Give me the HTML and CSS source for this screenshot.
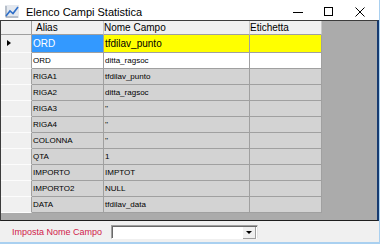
FILE: index.html
```html
<!DOCTYPE html>
<html lang="it">
<head>
    <meta charset="UTF-8">
    <meta name="viewport" content="width=device-width, initial-scale=1.0">
    <title>Elenco Campi Statistica</title>
    <link rel="stylesheet" href="styles.css">
</head>
<body>
    <div class="window">
        <div class="titlebar">
            <svg class="app-icon" width="16" height="16" viewBox="0 0 16 16">
                <rect x="1" y="2" width="14" height="13" fill="#e4e8ee"/>
                <path d="M2 3v11h12" fill="none" stroke="#8a96a6" stroke-width="1"/>
                <polyline points="2,13 6,8 9,10.5 14,4" fill="none" stroke="#2f6fc8" stroke-width="1.6"/>
            </svg>
            <span class="title">Elenco Campi Statistica</span>
            <div class="controls">
                <svg width="10" height="10" viewBox="0 0 10 10"><path d="M0 5.5h10" stroke="#000" stroke-width="1"/></svg>
                <svg width="10" height="10" viewBox="0 0 10 10"><rect x="0.5" y="0.5" width="8" height="8" fill="none" stroke="#000"/></svg>
                <svg width="10" height="10" viewBox="0 0 10 10"><path d="M0.5 0.5l9 9M9.5 0.5l-9 9" stroke="#000" stroke-width="1"/></svg>
            </div>
        </div>

        <div class="grid-area">
            <div class="grid">
                <div class="hdr corner"></div>
                <div class="hdr alias">Alias</div>
                <div class="hdr">Nome Campo</div>
                <div class="hdr">Etichetta</div>

                <div class="rh current"><span class="arrow"></span></div>
                <div class="cell sel-blue big">ORD</div>
                <div class="cell sel-yellow big">tfdilav_punto</div>
                <div class="cell sel-yellow big"></div>

                <div class="rh"></div>
                <div class="cell white">ORD</div>
                <div class="cell white">ditta_ragsoc</div>
                <div class="cell white"></div>

                <div class="rh"></div>
                <div class="cell">RIGA1</div>
                <div class="cell">tfdilav_punto</div>
                <div class="cell"></div>

                <div class="rh"></div>
                <div class="cell">RIGA2</div>
                <div class="cell">ditta_ragsoc</div>
                <div class="cell"></div>

                <div class="rh"></div>
                <div class="cell">RIGA3</div>
                <div class="cell">''</div>
                <div class="cell"></div>

                <div class="rh"></div>
                <div class="cell">RIGA4</div>
                <div class="cell">''</div>
                <div class="cell"></div>

                <div class="rh"></div>
                <div class="cell">COLONNA</div>
                <div class="cell">''</div>
                <div class="cell"></div>

                <div class="rh"></div>
                <div class="cell">QTA</div>
                <div class="cell">1</div>
                <div class="cell"></div>

                <div class="rh"></div>
                <div class="cell">IMPORTO</div>
                <div class="cell">IMPTOT</div>
                <div class="cell"></div>

                <div class="rh"></div>
                <div class="cell">IMPORTO2</div>
                <div class="cell">NULL</div>
                <div class="cell"></div>

                <div class="rh"></div>
                <div class="cell">DATA</div>
                <div class="cell">tfdilav_data</div>
                <div class="cell"></div>
            </div>
        </div>

        <div class="panel">
            <span class="label">Imposta Nome Campo</span>
            <div class="combo">
                <span class="combo-btn"></span>
            </div>
        </div>
    </div>
</body>
</html>
```

FILE: styles.css
```css
body {
    margin: 0;
    font-family: 'Liberation Sans', Arial, sans-serif;
    background-color: #f0f0f0;
}

.window {
    width: 380px;
    height: 244px;
    display: flex;
    flex-direction: column;
    box-sizing: border-box;
    border-bottom: 2px solid #a9d0f0;
    border-right: 1px solid #a9d0f0;
    overflow: hidden;
}

.titlebar {
    height: 20px;
    background-color: #fff;
    display: flex;
    align-items: center;
    flex-shrink: 0;
}

.app-icon {
    margin-left: 4px;
    margin-top: 2px;
}

.title {
    margin-left: 6px;
    font-size: 11px;
    color: #000;
    margin-top: 3px;
}

.controls {
    margin-left: auto;
    display: flex;
    align-items: center;
    gap: 21px;
    margin-right: 14px;
    margin-top: 3px;
}

.grid-area {
    height: 201px;
    box-sizing: border-box;
    background-color: #ababab;
    border-top: 1px solid #3c3c3c;
    border-left: 1px solid #3c3c3c;
    border-bottom: 1px solid #1e1e1e;
    border-right: 2px solid #163a70;
    flex-shrink: 0;
}

.grid {
    display: grid;
    grid-template-columns: 31px 72px 146px 72px;
    grid-template-rows: 14px 18px repeat(10, 16px);
}

.hdr {
    background-color: #f0f0f0;
    border-right: 1px solid #c8c8c8;
    border-bottom: 1px solid #a0a0a0;
    font-size: 10px;
    line-height: 13px;
    padding-left: 0;
    color: #000;
    white-space: nowrap;
    overflow: hidden;
}

.hdr.alias {
    padding-left: 4px;
}

.hdr.corner {
    border-right: 1px solid #a0a0a0;
}

.rh {
    background-color: #f0f0f0;
    border-right: 1px solid #a0a0a0;
    border-bottom: 1px solid #fcfcfc;
    position: relative;
}

.arrow {
    position: absolute;
    left: 6px;
    top: 5px;
    width: 0;
    height: 0;
    border-top: 3px solid transparent;
    border-bottom: 3px solid transparent;
    border-left: 4px solid #000;
}

.cell {
    background-color: #d3d3d3;
    border-right: 1px solid #a0a0a0;
    border-bottom: 1px solid #a0a0a0;
    font-size: 8px;
    line-height: 15px;
    padding-left: 1px;
    color: #000;
    white-space: nowrap;
    overflow: hidden;
}

.cell.white {
    background-color: #fff;
}

.cell.big {
    font-size: 10px;
    line-height: 17px;
}

.cell.sel-blue {
    background-color: #3399ff;
    color: #fff;
}

.cell.sel-yellow {
    background-color: #ffff00;
}

.panel {
    flex: 1;
    display: flex;
    align-items: center;
    background-color: #f0f0f0;
}

.label {
    margin-left: 12px;
    font-size: 9px;
    color: #d0194a;
    width: 99px;
}

.combo {
    width: 147px;
    height: 14px;
    box-sizing: border-box;
    background-color: #fff;
    border-top: 1px solid #a0a0a0;
    border-left: 1px solid #a0a0a0;
    border-right: 1px solid #e3e3e3;
    border-bottom: 1px solid #fff;
    box-shadow: inset 1px 1px 0 #696969;
    display: flex;
    justify-content: flex-end;
    margin-top: 1px;
}

.combo-btn {
    width: 12px;
    height: 11px;
    margin: 1px 1px 0 0;
    background-color: #f0f0f0;
    border-right: 1px solid #a0a0a0;
    border-bottom: 1px solid #a0a0a0;
    display: flex;
    align-items: center;
    justify-content: center;
}

.combo-btn::after {
    content: '';
    border-left: 3px solid transparent;
    border-right: 3px solid transparent;
    border-top: 3px solid #000;
}
```
